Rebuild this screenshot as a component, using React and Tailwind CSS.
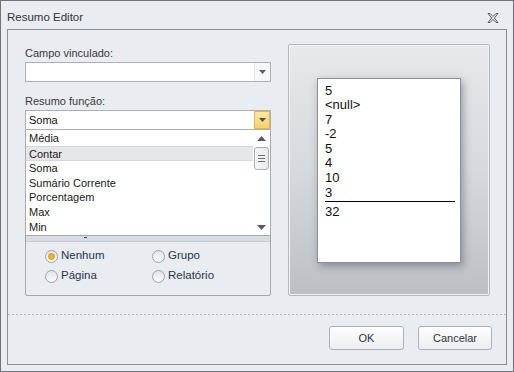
import React from "react";

const items = ["Média", "Contar", "Soma", "Sumário Corrente", "Porcentagem", "Max", "Min"];
const values = ["5", "<null>", "7", "-2", "5", "4", "10", "3"];

function Caret({ color = "#5b6068" }) {
  return (
    <svg width="7" height="4" viewBox="0 0 7 4">
      <path d="M0 0h7L3.5 4z" fill={color} />
    </svg>
  );
}

function Radio({ checked, label }) {
  return (
    <div className="flex items-center gap-[3px] h-[20px]">
      <span className="w-[13px] h-[13px] rounded-full border border-[#9ea3a9] bg-gradient-to-b from-[#e2e4e7] to-[#fbfbfc] flex items-center justify-center">
        {checked && <span className="w-[7px] h-[7px] rounded-full bg-[#f1b22a] border border-[#d99a1c]" />}
      </span>
      <span className="text-[#253550]">{label}</span>
    </div>
  );
}

export default function App() {
  return (
    <div
      className="w-[514px] h-[372px] border border-[#6f747b] bg-[#e9ecf0] text-[11px] text-[#3a3a3a] flex flex-col"
      style={{ fontFamily: '"Liberation Sans", Arial, sans-serif' }}
    >
      {/* title bar */}
      <div className="h-[28px] flex items-center justify-between pl-[6px] pr-[14px] pt-[6px]">
        <span className="text-[11.5px] text-[#2f3540]">Resumo Editor</span>
        <svg width="12" height="10" viewBox="0 0 12 10">
          <path
            d="M1 0.5h2L6 3.5l3-3h2L7.3 5 11 9.5H9L6 6.5l-3 3H1L4.7 5z"
            fill="none"
            stroke="#555a60"
            strokeWidth="1"
          />
        </svg>
      </div>

      {/* inner frame */}
      <div className="mx-[6px] w-[500px] h-[336px] border border-[#8a8f95] flex flex-col">
        <div className="flex pt-[14px] pl-[17px] h-[268px]">
          {/* left column */}
          <div className="w-[246px] flex flex-col">
            <div className="h-[18px] leading-[18px]">Campo vinculado:</div>
            <div className="h-[20px] border border-[#abb0b7] bg-white flex justify-end">
              <div className="w-[16px] border-l border-[#e3e6ea] bg-[#f7f8f9] flex items-center justify-center">
                <Caret />
              </div>
            </div>

            <div className="h-[18px] leading-[18px] mt-[10px]">Resumo função:</div>
            <div className="relative z-10">
              <div className="h-[20px] border border-[#abb0b7] bg-white flex items-center justify-between">
                <span className="pl-[3px] text-[#111]">Soma</span>
                <div className="w-[16px] h-full border border-[#e2b54e] bg-gradient-to-b from-[#fde9a4] to-[#fbd06a] flex items-center justify-center">
                  <Caret color="#4f5257" />
                </div>
              </div>

              {/* dropdown list */}
              <div className="absolute top-full left-0 w-[246px] h-[106px] border border-[#a7abb1] border-t-0 bg-white flex">
                <div className="flex-1 flex flex-col pt-[1px]">
                  {items.map((it) => (
                    <div
                      key={it}
                      className={`h-[15px] leading-[14px] pl-[3px] text-[#1a1a1a] ${
                        it === "Contar" ? "bg-[#e6e7e9] border-y border-[#d6d8db] leading-[13px]" : ""
                      }`}
                    >
                      {it}
                    </div>
                  ))}
                </div>
                <div className="w-[17px] flex flex-col items-center pt-[6px] pb-[5px]">
                  <svg width="9" height="5" viewBox="0 0 9 5">
                    <path d="M0 5L4.5 0 9 5z" fill="#555a60" />
                  </svg>
                  <div className="mt-[6px] w-[15px] h-[23px] rounded-[3px] border border-[#a9aeb4] bg-gradient-to-r from-[#f7f8f9] to-[#e8eaed] flex flex-col items-center justify-center gap-[2px]">
                    <span className="w-[7px] h-px bg-[#6a6f76]" />
                    <span className="w-[7px] h-px bg-[#6a6f76]" />
                    <span className="w-[7px] h-px bg-[#6a6f76]" />
                  </div>
                  <div className="flex-1" />
                  <svg width="9" height="5" viewBox="0 0 9 5">
                    <path d="M0 0L4.5 5 9 0z" fill="#555a60" />
                  </svg>
                </div>
              </div>
            </div>

            {/* group box */}
            <div className="mt-[92px] h-[74px] border border-[#a4a9af] rounded-[2px] flex flex-col">
              <div className="h-[19px] bg-[#d9dde2] border-b border-[#c5cad0] flex items-end pl-[58px] pb-[3px]">
                <span className="w-[3px] h-px bg-[#3a3a3a]" />
              </div>
              <div className="grid grid-cols-[107px_1fr] pl-[19px] pt-[4px] text-[11.5px]">
                <Radio checked label="Nenhum" />
                <Radio label="Grupo" />
                <Radio label="Página" />
                <Radio label="Relatório" />
              </div>
            </div>
          </div>

          {/* preview */}
          <div className="ml-[17px] w-[202px] h-[252px] border border-[#b3b8be] rounded-[2px] p-px bg-white/40">
            <div className="w-full h-full bg-gradient-to-b from-[#e7e9ec] via-[#d6d9dd] to-[#bcc0c5] flex items-center justify-center">
              <div className="w-[144px] h-[185px] bg-white border border-[#8d9197] pt-[5px] pl-[7px] pr-[5px] text-[13px] text-[#111] shadow-[2px_3px_8px_rgba(60,65,75,0.45)]">
                {values.map((v, i) => (
                  <div key={i} className="h-[14.6px] leading-[14.6px]">
                    {v}
                  </div>
                ))}
                <div className="mt-[1px] h-px bg-black" />
                <div className="leading-[16px] mt-[2px]">32</div>
              </div>
            </div>
          </div>
        </div>

        {/* dotted separator */}
        <div className="mt-[16px] h-px bg-[repeating-linear-gradient(90deg,#b4b8bd_0_2px,transparent_2px_4px)]" />

        {/* buttons */}
        <div className="flex justify-end gap-[14px] pr-[14px] pt-[11px]">
          <button className="w-[75px] h-[24px] rounded-[3px] border border-[#adb1b7] bg-gradient-to-b from-[#fdfdfe] to-[#eceef1] text-[#2f3540] text-[11px]">
            OK
          </button>
          <button className="w-[74px] h-[24px] rounded-[3px] border border-[#adb1b7] bg-gradient-to-b from-[#fdfdfe] to-[#eceef1] text-[#2f3540] text-[11px]">
            Cancelar
          </button>
        </div>
      </div>
    </div>
  );
}
